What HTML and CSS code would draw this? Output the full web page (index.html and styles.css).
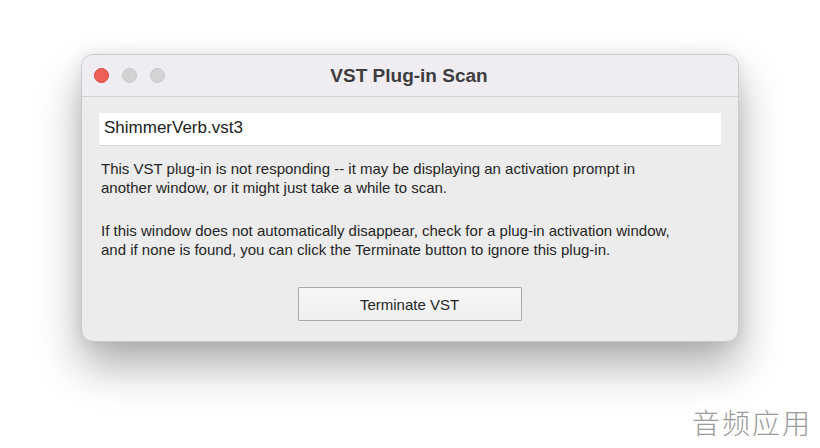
FILE: index.html
```html
<!DOCTYPE html>
<html>
<head>
<meta charset="utf-8">
<link rel="stylesheet" href="styles.css">
</head>
<body>
<div class="stage">
  <div class="window">
    <div class="titlebar">
      <div class="lights">
        <span class="light red"></span>
        <span class="light grey"></span>
        <span class="light grey"></span>
      </div>
      <div class="title">VST Plug-in Scan</div>
    </div>
    <div class="content">
      <div class="field">ShimmerVerb.vst3</div>
      <p class="msg">This VST plug-in is not responding -- it may be displaying an activation prompt in<br>another window, or it might just take a while to scan.</p>
      <p class="msg">If this window does not automatically disappear, check for a plug-in activation window,<br>and if none is found, you can click the Terminate button to ignore this plug-in.</p>
      <div class="actions"><button class="btn">Terminate VST</button></div>
    </div>
  </div>
  <div class="watermark">音频应用</div>
</div>
</body>
</html>
```
FILE: styles.css
```css
* { box-sizing: border-box; }
html, body { margin: 0; padding: 0; background: #ffffff; }
body { width: 820px; height: 448px; overflow: hidden; font-family: "Liberation Sans", Arial, sans-serif; }
.stage { position: relative; width: 820px; height: 448px; padding: 54px 0 0 81px; }
.window {
  width: 658px;
  height: 288px;
  border-radius: 12px;
  background: #ececec;
  border: 1px solid #c9c9cb;
  box-shadow: 0 24px 44px rgba(0,0,0,0.32), 0 0 16px rgba(0,0,0,0.08);
  overflow: hidden;
  display: flex;
  flex-direction: column;
}
.titlebar {
  height: 42px;
  background: #efedf1;
  border-bottom: 1px solid #d4d2d6;
  display: flex;
  align-items: center;
  position: relative;
}
.lights { display: flex; gap: 13px; padding-left: 12px; }
.light { width: 15px; height: 15px; border-radius: 50%; display: block; }
.red { background: #ee5f58; border: 0.5px solid #d9483f; }
.grey { background: #d3d2d5; border: 0.5px solid #c6c5c8; }
.title {
  position: absolute;
  left: 0; right: 0; top: 0; bottom: 0;
  display: flex; align-items: center; justify-content: center;
  font-weight: bold;
  font-size: 19px;
  color: #3d3c40;
  padding-right: 2px;
}
.content { padding: 16px 16px 0 17px; }
.field {
  height: 33px;
  background: #ffffff;
  border-bottom: 1px solid #d6d6d6;
  font-size: 17px;
  line-height: 20px;
  color: #222;
  padding: 5px 0 0 5px;
  margin-right: 1px;
}
.msg {
  margin: 13px 0 0 2px;
  font-size: 15px;
  line-height: 19px;
  color: #262626;
}
.msg + .msg { margin-top: 24px; }
.actions { display: flex; justify-content: center; margin-top: 28px; padding-right: 2px; }
.btn {
  width: 224px;
  height: 34px;
  background: linear-gradient(#f7f7f7, #efefef);
  border: 1px solid #a9a9a9;
  border-radius: 1px;
  font-family: "Liberation Sans", Arial, sans-serif;
  font-size: 15px;
  color: #262626;
  padding: 0;
}
.watermark {
  position: absolute;
  right: 8px;
  bottom: 6px;
  font-family: "Noto Sans CJK SC", sans-serif;
  font-weight: 200;
  font-size: 28px;
  color: #9a9a9a;
  letter-spacing: 2px;
}
```
